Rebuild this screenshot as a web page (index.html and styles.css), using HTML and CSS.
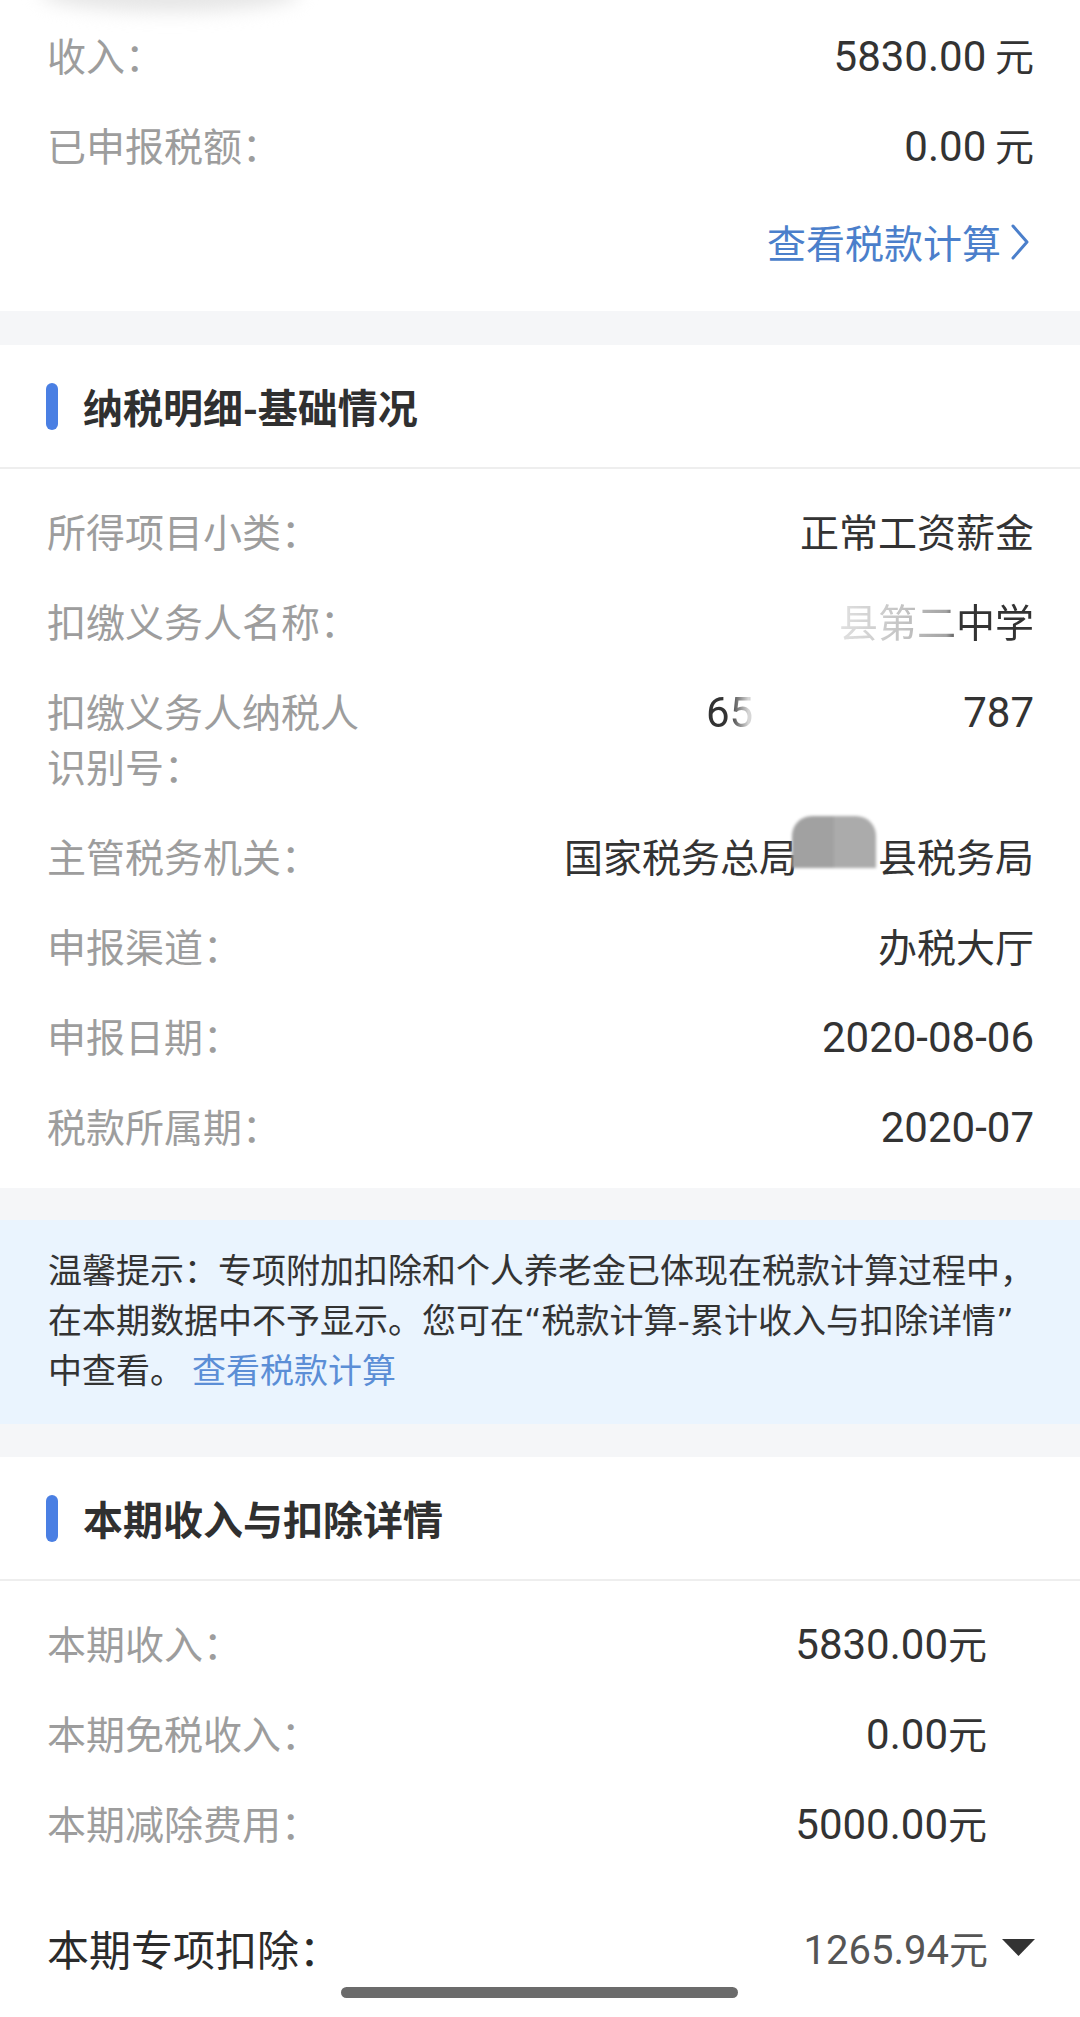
FILE: index.html
```html
<!DOCTYPE html>
<html lang="zh-CN">
<head>
<meta charset="utf-8">
<title>纳税明细</title>
<link rel="stylesheet" href="styles.css">
</head>
<body>
<div class="page">
  <div class="smear"></div>

  <section class="card summary">
    <div class="row"><span class="label">收入：</span><span class="value"><span class="num">5830.00</span> 元</span></div>
    <div class="row"><span class="label">已申报税额：</span><span class="value"><span class="num">0.00</span> 元</span></div>
    <div class="more">
      <a class="more-link" href="#">查看税款计算</a>
      <svg class="chevron" width="24" height="38" viewBox="0 0 24 38"><polyline points="5,3 19,19 5,35" fill="none" stroke="#4b7fcb" stroke-width="3" stroke-linecap="round" stroke-linejoin="round"/></svg>
    </div>
  </section>

  <div class="gap"></div>

  <section class="card">
    <header class="card-head"><i class="bar"></i><h2 class="card-title">纳税明细-基础情况</h2></header>
    <div class="rows">
      <div class="row"><span class="label">所得项目小类：</span><span class="value">正常工资薪金</span></div>
      <div class="row"><span class="label">扣缴义务人名称：</span><span class="value"><span class="fade-name">县第二中学</span></span></div>
      <div class="row"><span class="label">扣缴义务人纳税人识别号：</span><span class="value"><span class="num fade-id">65</span><span class="id-gap"></span><span class="num">787</span></span></div>
      <div class="row"><span class="label">主管税务机关：</span><span class="value">国家税务总局<span class="redact"></span>县税务局</span></div>
      <div class="row"><span class="label">申报渠道：</span><span class="value">办税大厅</span></div>
      <div class="row"><span class="label">申报日期：</span><span class="value"><span class="num">2020-08-06</span></span></div>
      <div class="row"><span class="label">税款所属期：</span><span class="value"><span class="num">2020-07</span></span></div>
    </div>
  </section>

  <div class="notice-wrap">
    <p class="notice"><span>温馨提示：专项附加扣除和个人养老金已体现在税款计算过程中，在本期数据中不予显示。您可在“税款计算-累计收入与扣除详情”</span><span>中查看。</span><a class="notice-link" href="#">查看税款计算</a></p>
  </div>

  <section class="card">
    <header class="card-head"><i class="bar"></i><h2 class="card-title">本期收入与扣除详情</h2></header>
    <div class="rows income">
      <div class="row row--slot"><span class="label">本期收入：</span><span class="value"><span class="num">5830.00</span>元</span></div>
      <div class="row row--slot"><span class="label">本期免税收入：</span><span class="value"><span class="num">0.00</span>元</span></div>
      <div class="row row--slot"><span class="label">本期减除费用：</span><span class="value"><span class="num">5000.00</span>元</span></div>
      <div class="row row--expand">
        <span class="label label--strong">本期专项扣除：</span>
        <span class="value value--muted"><span class="num num--sm">1265.94</span>元</span>
        <svg class="caret" width="33" height="17" viewBox="0 0 33 17"><polygon points="0,0 33,0 16.5,17" fill="#333"/></svg>
      </div>
    </div>
  </section>

  <div class="home-indicator"></div>
</div>
</body>
</html>
```

FILE: styles.css
```css
* { box-sizing: border-box; }

body {
  margin: 0;
  background: #ffffff;
  font-family: "Noto Sans CJK SC", sans-serif;
  color: #333333;
}

.page {
  position: relative;
  overflow: hidden;
}

.smear {
  position: absolute;
  left: 40px;
  top: -26px;
  width: 260px;
  height: 38px;
  border-radius: 50%;
  background: #e6e6e6;
  filter: blur(9px);
}

.card {
  background: #ffffff;
}

.summary {
  padding: 9px 0 42px;
}

.row {
  display: flex;
  align-items: flex-start;
  padding: 17.5px 46px 17.5px 47px;
  font-size: 39px;
  line-height: 55px;
}

.label {
  flex: none;
  width: 330px;
  color: #9d9d9d;
}

.value {
  flex: 1;
  text-align: right;
  color: #333333;
  white-space: nowrap;
}

.num {
  font-family: Roboto, sans-serif;
  font-size: 42px;
  line-height: 1;
}

.more {
  display: flex;
  justify-content: flex-end;
  align-items: center;
  margin-top: 25px;
  padding: 0 48px 0 47px;
  height: 55px;
}

.more-link {
  font-size: 39px;
  line-height: 55px;
  color: #4b7fcb;
  text-decoration: none;
}

.chevron {
  margin-left: 7px;
  display: block;
}

.gap {
  height: 34px;
  background: #f5f6f8;
}

.card-head {
  display: flex;
  align-items: center;
  height: 124px;
  padding-left: 46px;
  border-bottom: 2px solid #eeeeee;
}

.bar {
  display: block;
  width: 12px;
  height: 47px;
  border-radius: 6px;
  background: #4a7fe3;
  margin-right: 25px;
}

.card-title {
  margin: 0;
  font-size: 40px;
  font-weight: 700;
  line-height: 1;
  color: #303030;
}

.rows {
  padding: 16px 0 18px;
}

.fade-name {
  -webkit-mask-image: linear-gradient(90deg, rgba(0,0,0,0.15) 0%, rgba(0,0,0,0.3) 35%, rgba(0,0,0,0.45) 55%, #000 62%);
  mask-image: linear-gradient(90deg, rgba(0,0,0,0.15) 0%, rgba(0,0,0,0.3) 35%, rgba(0,0,0,0.45) 55%, #000 62%);
}

.fade-id {
  display: inline-block;
  -webkit-mask-image: linear-gradient(90deg, #000 50%, rgba(0,0,0,0.2) 90%);
  mask-image: linear-gradient(90deg, #000 50%, rgba(0,0,0,0.2) 90%);
}

.id-gap {
  display: inline-block;
  width: 210px;
}

.redact {
  display: inline-block;
  position: relative;
  width: 80px;
  height: 55px;
  vertical-align: top;
}

.redact::before {
  content: "";
  position: absolute;
  left: -6px;
  top: -12px;
  width: 84px;
  height: 52px;
  border-radius: 20px 20px 0 0;
  background: linear-gradient(90deg, #a1a1a1 50%, #ababab 50%);
  filter: blur(1.5px);
}

.notice-wrap {
  background: #f5f6f8;
  padding: 32px 0 33px;
}

.notice {
  margin: 0;
  background: #eaf4fe;
  padding: 26px 42px 28px 48px;
  font-family: "DejaVu Sans", "Noto Sans CJK SC", sans-serif;
  font-size: 34px;
  line-height: 50px;
  color: #333333;
}

.notice-link {
  margin-left: 8px;
  color: #5b8ed6;
  text-decoration: none;
}

.row--slot {
  padding-right: 93px;
}

.row--expand {
  align-items: center;
  margin-top: 35px;
  padding-right: 45px;
}

.label--strong {
  font-size: 42px;
  color: #2b2b2b;
}

.value--muted {
  color: #555555;
}

.num--sm {
  font-size: 40px;
}

.caret {
  display: block;
  flex: none;
  margin-left: 14px;
}

.home-indicator {
  position: fixed;
  left: 341px;
  bottom: 19px;
  width: 397px;
  height: 11px;
  border-radius: 6px;
  background: #6b6b6b;
}
```
